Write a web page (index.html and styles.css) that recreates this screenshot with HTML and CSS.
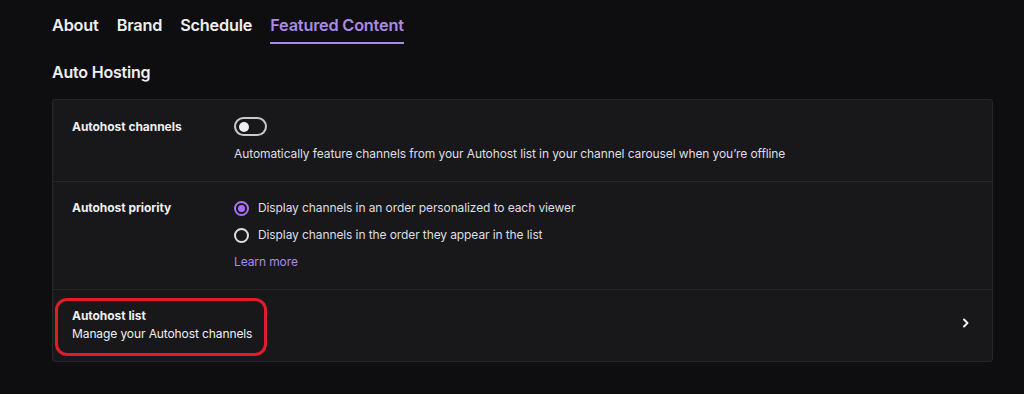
FILE: index.html
```html
<!DOCTYPE html>
<html>
<head>
<meta charset="utf-8">
<link rel="stylesheet" href="styles.css">
</head>
<body>
<div class="page">
  <nav class="tabs">
    <span class="tab">About</span>
    <span class="tab">Brand</span>
    <span class="tab">Schedule</span>
    <span class="tab active">Featured Content</span>
  </nav>
  <h2 class="section-title">Auto Hosting</h2>
  <div class="card">
    <div class="row row-channels">
      <div class="label">Autohost channels</div>
      <div class="content">
        <div class="toggle"><span class="knob"></span></div>
        <div class="desc">Automatically feature channels from your Autohost list in your channel carousel when you’re offline</div>
      </div>
    </div>
    <div class="row row-priority">
      <div class="label">Autohost priority</div>
      <div class="content">
        <div class="radio-line"><span class="radio checked"></span><span class="desc">Display channels in an order personalized to each viewer</span></div>
        <div class="radio-line"><span class="radio"></span><span class="desc">Display channels in the order they appear in the list</span></div>
        <a class="link">Learn more</a>
      </div>
    </div>
    <div class="row row-list">
      <div class="list-text">
        <div class="label">Autohost list</div>
        <div class="desc">Manage your Autohost channels</div>
      </div>
      <svg class="chevron" width="12" height="12" viewBox="0 0 12 12"><path d="M4 2.5 L7.5 6 L4 9.5" fill="none" stroke="#efeff1" stroke-width="2" stroke-linecap="round" stroke-linejoin="round"/></svg>
      <div class="highlight"></div>
    </div>
  </div>
</div>
</body>
</html>
```
FILE: styles.css
```css
html, body {
  margin: 0;
  padding: 0;
  background: #0e0e10;
  font-family: Inter, "Noto Sans", sans-serif;
  color: #efeff1;
}
.page {
  padding: 14px 31px 0 52px;
}
.tabs {
  display: flex;
  gap: 18px;
  height: 30px;
}
.tab {
  font-size: 16.3px;
  font-weight: 600;
  letter-spacing: -0.2px;
  line-height: 22px;
  color: #efeff1;
  height: 30px;
  box-sizing: border-box;
}
.tab.active {
  color: #a98ae8;
  border-bottom: 2px solid #a98ae8;
}
.section-title {
  margin: 18px 0 0 0;
  font-size: 16px;
  font-weight: 600;
  letter-spacing: -0.2px;
  line-height: 20px;
  color: #efeff1;
}
.card {
  margin-top: 17px;
  background: #18181b;
  border: 1px solid #26262c;
  border-radius: 3px;
}
.row {
  display: flex;
  padding: 0 19px;
  border-top: 1px solid #26262c;
  position: relative;
}
.row:first-child { border-top: none; }
.label {
  width: 162px;
  flex-shrink: 0;
  font-size: 12px;
  font-weight: 700;
  letter-spacing: -0.05px;
  line-height: 16px;
}
.desc {
  font-size: 12px;
  letter-spacing: -0.1px;
  line-height: 16px;
  color: #dedee3;
}
.row-channels { padding-top: 18px; padding-bottom: 19px; }
.row-channels .label { padding-top: 1px; }
.toggle {
  width: 29px;
  height: 15px;
  border: 2px solid #c8c8cf;
  border-radius: 10px;
  box-sizing: content-box;
  position: relative;
  margin-top: -1px;
}
.knob {
  position: absolute;
  left: 3px;
  top: 2.5px;
  width: 10px;
  height: 10px;
  border-radius: 50%;
  background: #efeff1;
}
.row-channels .desc { margin-top: 10px; }
.row-priority { padding-top: 18px; padding-bottom: 19px; }
.radio-line {
  display: flex;
  align-items: center;
  gap: 9px;
  height: 16px;
  margin-bottom: 11px;
}
.radio {
  width: 11px;
  height: 11px;
  border: 2px solid #dedee3;
  border-radius: 50%;
  box-sizing: content-box;
  position: relative;
}
.radio.checked { border-color: #a970ff; }
.radio.checked::after {
  content: "";
  position: absolute;
  left: 2px;
  top: 2px;
  width: 7px;
  height: 7px;
  border-radius: 50%;
  background: #a970ff;
}
.link {
  display: block;
  font-size: 12px;
  letter-spacing: -0.1px;
  line-height: 16px;
  color: #a98ae8;
}
.row-list {
  align-items: center;
  justify-content: space-between;
  padding-top: 18px;
  padding-bottom: 19px;
  padding-right: 20px;
}
.list-text .desc { margin-top: 2px; color: #efeff1; }
.chevron { display: block; margin-bottom: 4px; }
.highlight {
  position: absolute;
  left: 2px;
  top: 8px;
  width: 206px;
  height: 52px;
  border: 3px solid #e21b2b;
  border-radius: 12px;
  pointer-events: none;
}
```
